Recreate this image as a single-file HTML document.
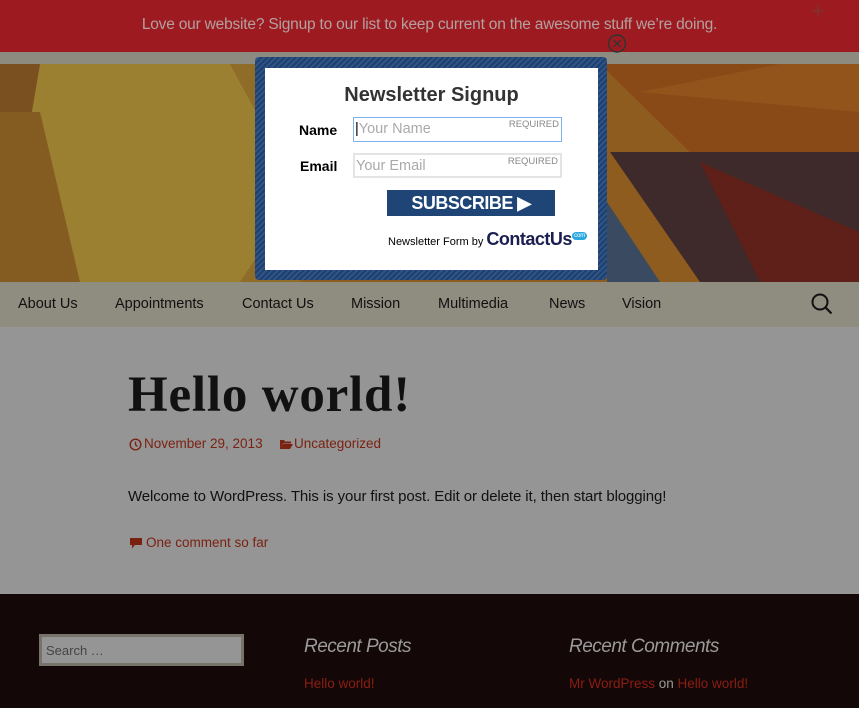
<!DOCTYPE html>
<html><head><meta charset="utf-8"><style>
*{margin:0;padding:0;box-sizing:border-box}
body{width:859px;height:708px;overflow:hidden;font-family:"Liberation Sans",sans-serif;background:#959595;position:relative}
.top{position:absolute;left:0;top:0;width:859px;height:52px;background:#9d1b20;color:#b3a0a0;font-size:15.5px;text-align:center;line-height:50px;letter-spacing:-0.2px}
.hdr{position:absolute;left:0;top:52px;width:859px;height:230px;overflow:hidden;background:#8a5a1c}
.nav{position:absolute;left:0;top:282px;width:859px;height:45px;background:#8f8c80;font-size:14.5px;color:#111}
.nav span{position:absolute;top:14px}
.content{position:absolute;left:0;top:327px;width:859px;height:267px;background:#959595}
h1{position:absolute;left:128px;top:366px;font-family:"Liberation Serif",serif;font-weight:bold;font-size:51px;color:#111;letter-spacing:0.8px}
.meta{position:absolute;top:436px;font-size:13.5px;color:#7a2212}
.p{position:absolute;left:128px;top:488px;font-size:15px;color:#111;letter-spacing:-0.1px}
.foot{position:absolute;left:0;top:594px;width:859px;height:114px;background:#130707}
.srch{position:absolute;left:39px;top:634px;width:205px;height:32px;background:#959595;border:3px solid #77736a;color:#444;font-size:13px;padding:6px 4px}
.fh{position:absolute;top:636px;font-style:italic;font-size:19px;color:#9a9a9a;letter-spacing:-0.5px}
.fl{position:absolute;top:676px;font-size:13.5px;color:#8c1e12}
.pop{position:absolute;left:255px;top:57px;width:352px;height:223px;border-radius:4px;background:repeating-linear-gradient(135deg,#1f3f6c 0 2px,#2e5488 2px 4px)}
.in{position:absolute;left:10px;top:11px;width:333px;height:202px;background:#fff}
.in .t{position:absolute;left:0;width:100%;top:16px;text-align:center;font-weight:bold;font-size:20px;color:#333}
.lab{position:absolute;font-weight:bold;font-size:14px;color:#000}
.inp{position:absolute;left:88px;width:209px;height:25px;border:2px solid #e4e4e4;font-size:14.5px;color:#aaa;padding:3px 1px}
.inp i{position:absolute;right:2px;top:1px;font-style:normal;font-size:9.5px;color:#888}
.btn{position:absolute;left:122px;top:122px;width:168px;height:26px;background:#1f4577;color:#fff;font-weight:bold;font-size:18px;text-align:center;line-height:26px;letter-spacing:-0.5px}
.by{position:absolute;left:123px;top:161px;font-size:11px;color:#000;white-space:nowrap}
.by b{font-size:18px;color:#1b1f4f;letter-spacing:-0.5px}
</style></head><body>
<div class="top">Love our website? Signup to our list to keep current on the awesome stuff we’re doing.</div>
<svg style="position:absolute;left:811px;top:4px" width="14" height="14"><path d="M7 1v12M1 7h12" stroke="#8a2a2a" stroke-width="2.5"/></svg>
<div class="hdr">
<svg width="859" height="230" viewBox="0 0 859 230">
<rect width="859" height="230" fill="#8e5c1e"/>
<rect width="859" height="12" fill="#8d8a80"/>
<polygon points="0,12 140,12 130,80 0,60" fill="#7a5020"/>
<polygon points="40,12 230,12 300,140 240,230 80,230 20,130" fill="#9a8030"/>
<polygon points="230,12 320,12 340,150 300,230 240,230 300,140" fill="#8f6c28"/>
<polygon points="0,60 40,60 80,230 0,230" fill="#845c22"/>
<polygon points="600,12 859,12 859,110 700,110" fill="#8a4a18"/>
<polygon points="640,40 780,12 859,12 859,60" fill="#93541c"/>
<polygon points="610,100 859,100 859,230 700,230" fill="#3e2a2a"/>
<polygon points="700,110 760,230 859,230 859,180" fill="#5e2018"/>
<polygon points="607,150 660,230 607,230" fill="#3a4a60"/>
</svg></div>
<svg style="position:absolute;left:607px;top:34px" width="20" height="20"><circle cx="10" cy="9.5" r="8.5" fill="none" stroke="#333" stroke-width="1.5"/><path d="M6.5 6l7 7M13.5 6l-7 7" stroke="#333" stroke-width="1.3"/></svg>
<div class="nav">
<span style="left:18px">About Us</span><span style="left:115px">Appointments</span><span style="left:242px">Contact Us</span><span style="left:351px">Mission</span><span style="left:438px">Multimedia</span><span style="left:549px">News</span><span style="left:622px">Vision</span>
<svg style="position:absolute;left:810px;top:10px" width="24" height="24"><circle cx="10" cy="10" r="7.5" fill="none" stroke="#111" stroke-width="2"/><path d="M15.5 15.5l6 6" stroke="#111" stroke-width="2.2"/></svg>
</div>
<div class="content"></div>
<h1>Hello world!</h1>
<svg style="position:absolute;left:129px;top:438px" width="13" height="13"><circle cx="6.5" cy="6.5" r="5.3" fill="none" stroke="#7a2212" stroke-width="1.4"/><path d="M6.5 3.5v3.3l2 1.6" stroke="#7a2212" stroke-width="1.3" fill="none"/></svg>
<div class="meta" style="left:144px">November 29, 2013</div>
<svg style="position:absolute;left:280px;top:439px" width="13" height="11"><path d="M0 1h4l1 1.5h6v2H3L0 10z M3 5h10l-3 5H0z" fill="#7a2212"/></svg>
<div class="meta" style="left:294px">Uncategorized</div>
<div class="p">Welcome to WordPress. This is your first post. Edit or delete it, then start blogging!</div>
<svg style="position:absolute;left:129px;top:537px" width="14" height="13"><path d="M1 1h12v7H6l-3 3.5V8H1z" fill="#7a2212"/></svg>
<div class="meta" style="left:146px;top:535px">One comment so far</div>
<div class="foot"></div>
<div class="srch">Search …</div>
<div class="fh" style="left:304px">Recent Posts</div>
<div class="fh" style="left:569px">Recent Comments</div>
<div class="fl" style="left:304px">Hello world!</div>
<div class="fl" style="left:569px">Mr WordPress <span style="color:#999">on</span> Hello world!</div>
<div class="pop"><div class="in">
<div class="t">Newsletter Signup</div>
<div class="lab" style="left:34px;top:54px">Name</div>
<div class="inp" style="top:49px;border-color:#7fb2ee;border-width:1.5px"><span style="color:#000">|</span>Your Name<i>REQUIRED</i></div>
<div class="lab" style="left:35px;top:90px">Email</div>
<div class="inp" style="top:85px">Your Email<i>REQUIRED</i></div>
<div class="btn">SUBSCRIBE ▶</div>
<div class="by">Newsletter Form by <b>ContactUs</b><span style="display:inline-block;background:#2aa7e0;color:#fff;font-size:6px;border-radius:5px;padding:1px 2px;vertical-align:8px">com</span></div>
</div></div>
</body></html>
